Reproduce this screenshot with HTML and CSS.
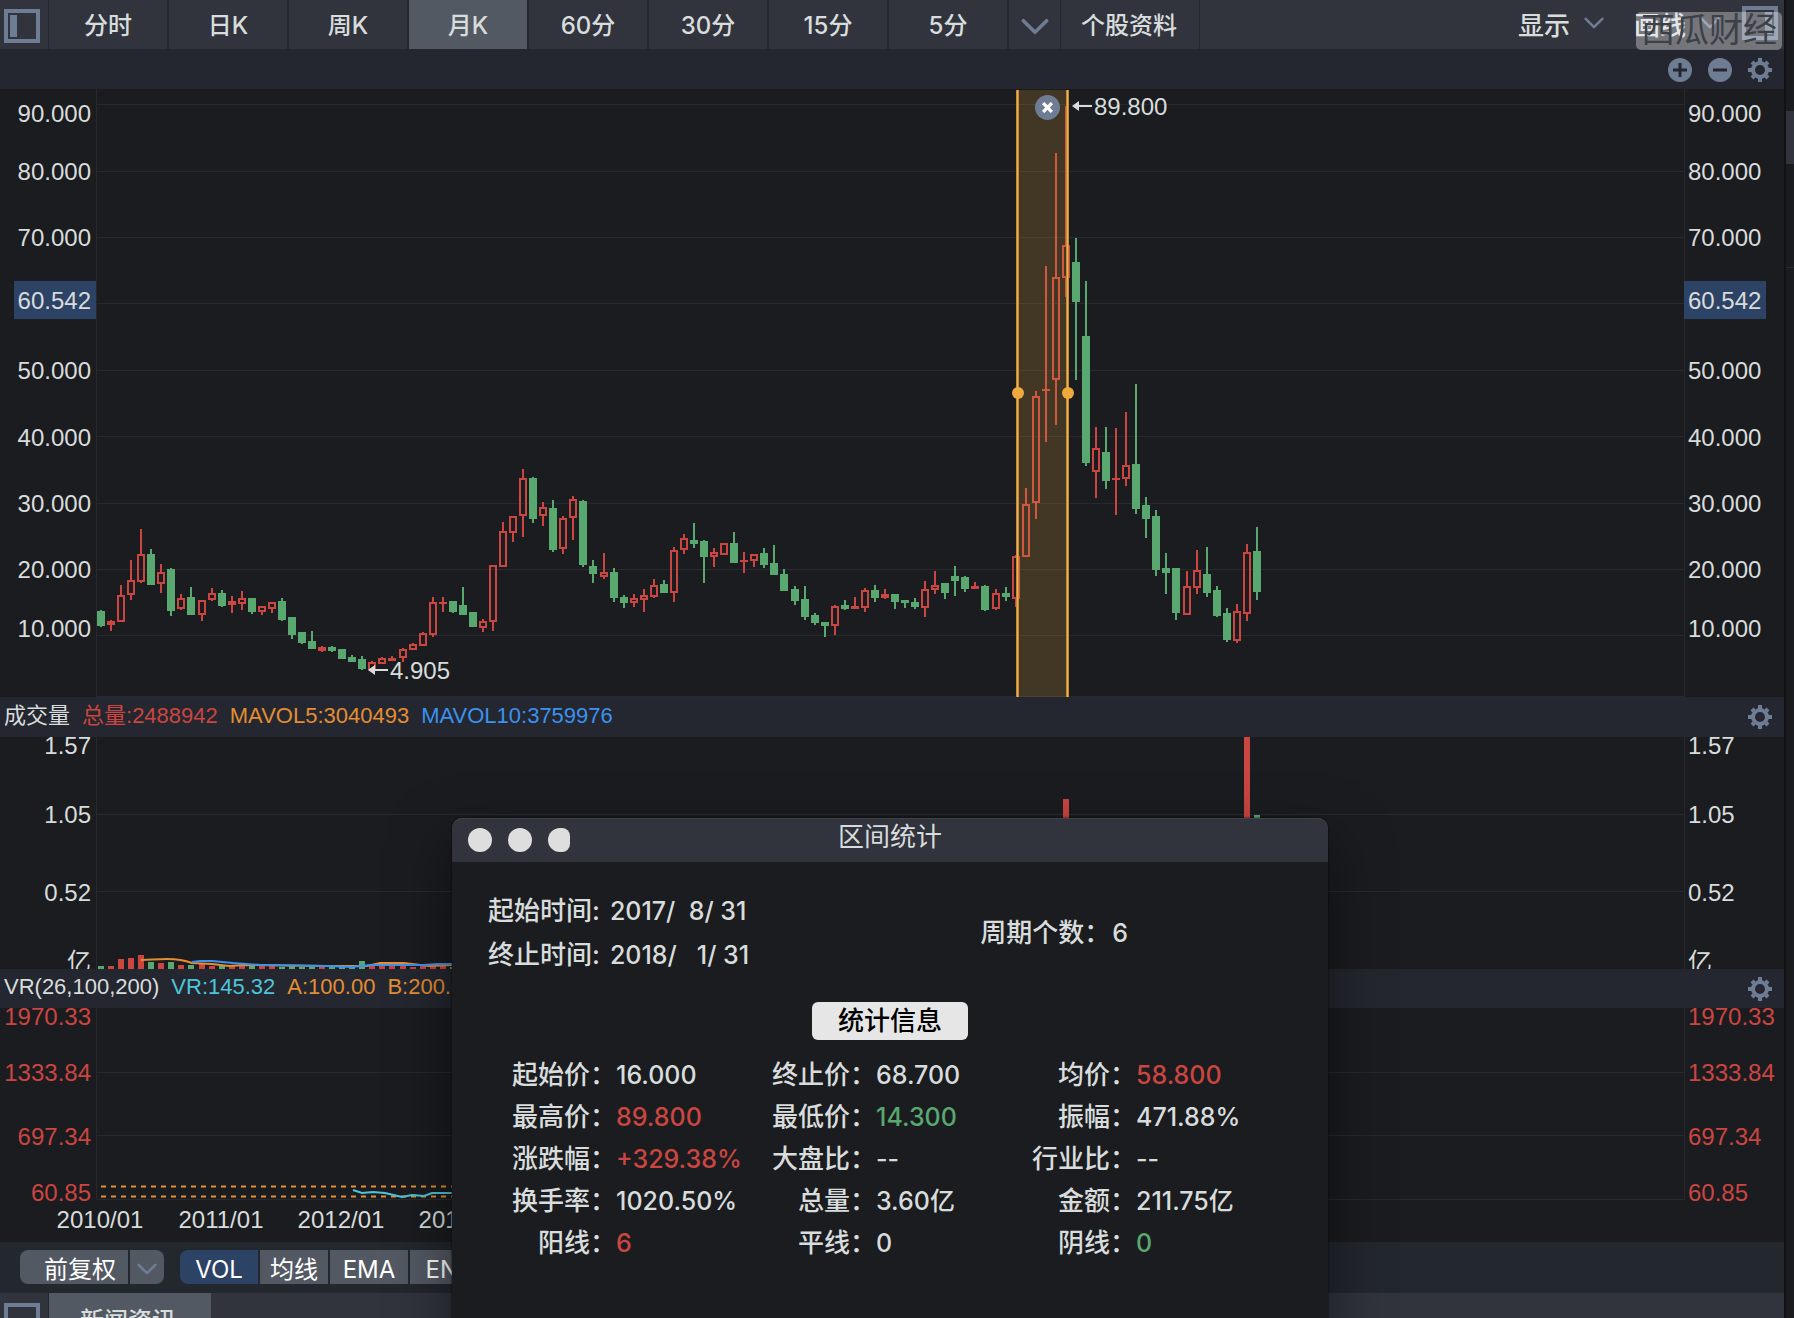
FILE: index.html
```html
<!DOCTYPE html>
<html lang="zh-CN">
<head>
<meta charset="utf-8">
<title>月K - 区间统计</title>
<link rel="stylesheet" href="styles.css">
</head>
<body>
<svg class="sprite" aria-hidden="true">
  <symbol id="chevron" viewBox="0 0 24 14"><path d="M2 2 L12 12 L22 2" fill="none" stroke="currentColor" stroke-width="3" stroke-linecap="round" stroke-linejoin="round"/></symbol>
  <symbol id="gear" viewBox="-12 -12 24 24">
    <circle r="7" fill="none" stroke="currentColor" stroke-width="4"/>
    <path d="M0 -12V-8M0 12V8M-12 0H-8M12 0H8M-8 -8L-6 -6M8 8L6 6M-8 8L-6 6M8 -8L6 -6" stroke="currentColor" stroke-width="4"/>
  </symbol>
  <symbol id="panel-left" viewBox="0 0 36 34"><rect x="2" y="2" width="32" height="30" fill="none" stroke="currentColor" stroke-width="4"/><rect x="6" y="6" width="7" height="22" fill="currentColor"/></symbol>
  <symbol id="panel-right" viewBox="0 0 36 34"><rect x="2" y="2" width="32" height="30" fill="none" stroke="currentColor" stroke-width="4"/><rect x="23" y="6" width="7" height="22" fill="currentColor"/></symbol>
  <symbol id="panel-plain" viewBox="0 0 36 34"><rect x="2" y="2" width="32" height="30" fill="none" stroke="currentColor" stroke-width="4"/></symbol>
</svg>

<div class="app">
  <main class="workspace">
    <header class="toolbar">
      <button class="cell cell-icon" aria-label="左侧栏"><svg class="icon-panel"><use href="#panel-left"/></svg></button>
      <nav class="periods">
        <button class="tab">分时</button>
        <button class="tab">日K</button>
        <button class="tab">周K</button>
        <button class="tab tab-active">月K</button>
        <button class="tab">60分</button>
        <button class="tab">30分</button>
        <button class="tab">15分</button>
        <button class="tab">5分</button>
      </nav>
      <button class="cell cell-more" aria-label="更多周期"><svg class="icon-chevron"><use href="#chevron"/></svg></button>
      <button class="cell cell-info">个股资料</button>
      <div class="tools">
        <button class="tool">显示<svg class="icon-chevron-small"><use href="#chevron"/></svg></button>
        <button class="tool">画线<svg class="icon-chevron-small"><use href="#chevron"/></svg></button>
        <button class="tool-panel" aria-label="右侧栏"><svg class="icon-panel"><use href="#panel-right"/></svg></button>
        <span class="watermark">西瓜财经</span>
      </div>
    </header>

    <div class="band band-zoom">
      <span class="band-actions">
        <button class="icon-button" aria-label="放大"><svg class="icon" viewBox="-12 -12 24 24"><circle r="12" fill="currentColor"/><path class="sign" d="M-7 0H7M0 -7V7"/></svg></button>
        <button class="icon-button" aria-label="缩小"><svg class="icon" viewBox="-12 -12 24 24"><circle r="12" fill="currentColor"/><path class="sign" d="M-7 0H7"/></svg></button>
        <button class="icon-button" aria-label="设置"><svg class="icon"><use href="#gear"/></svg></button>
      </span>
    </div>

    <section class="pane pane-price">
      <svg class="chart" aria-label="月K线">
        <g class="grid">
          <path d="M96.5 0V608"/>
          <line x1="97" x2="100%" y1="15.5" y2="15.5"/>
          <line x1="97" x2="100%" y1="82.5" y2="82.5"/>
          <line x1="97" x2="100%" y1="148.5" y2="148.5"/>
          <line x1="97" x2="100%" y1="214.5" y2="214.5"/>
          <line x1="97" x2="100%" y1="281.5" y2="281.5"/>
          <line x1="97" x2="100%" y1="347.5" y2="347.5"/>
          <line x1="97" x2="100%" y1="414.5" y2="414.5"/>
          <line x1="97" x2="100%" y1="480.5" y2="480.5"/>
          <line x1="97" x2="100%" y1="546.5" y2="546.5"/>
          <line x1="97" x2="100%" y1="607.5" y2="607.5"/>
        </g>
        <g id="candles"></g>
        <g class="marker">
          <path class="arrow" d="M1078 17H1092"/><path class="arrow-head" d="M1072 17L1079 12V22Z"/>
          <text x="1094" y="26">89.800</text>
          <path class="arrow" d="M374 581H388"/><path class="arrow-head" d="M368 581L375 576V586Z"/>
          <text x="390" y="590">4.905</text>
        </g>
        <g class="range">
          <rect class="range-fill" x="1018" y="1" width="50" height="607"/>
          <path class="range-edge" d="M1017.5 1V608M1067.5 1V608"/>
          <path class="range-line" d="M1017.5 1V608M1067.5 1V608"/>
          <circle cx="1018" cy="304" r="6"/><circle cx="1068" cy="304" r="6"/>
        </g>
        <g class="axis axis-left">
          <rect class="axis-tag" x="14" y="192" width="82" height="38"/>
          <text x="91" y="33">90.000</text><text x="91" y="91">80.000</text><text x="91" y="157">70.000</text>
          <text x="91" y="220">60.542</text><text x="91" y="290">50.000</text><text x="91" y="357">40.000</text>
          <text x="91" y="423">30.000</text><text x="91" y="489">20.000</text><text x="91" y="548">10.000</text>
        </g>
        <svg class="axis" x="100%">
          <rect class="axis-bg" x="-100" width="100" height="608"/>
          <path class="axis-line" d="M-99.5 0V608"/>
          <rect class="axis-tag" x="-100" y="192" width="82" height="38"/>
          <text x="-96" y="33">90.000</text><text x="-96" y="91">80.000</text><text x="-96" y="157">70.000</text>
          <text x="-96" y="220">60.542</text><text x="-96" y="290">50.000</text><text x="-96" y="357">40.000</text>
          <text x="-96" y="423">30.000</text><text x="-96" y="489">20.000</text><text x="-96" y="548">10.000</text>
        </svg>
      </svg>
      <button class="range-close" aria-label="关闭区间"><svg viewBox="0 0 10 10"><path d="M1 1L9 9M9 1L1 9"/></svg></button>
    </section>

    <div class="band">
      <span>成交量</span><span class="up">总量:2488942</span><span class="ma-orange">MAVOL5:3040493</span><span class="ma-blue">MAVOL10:3759976</span>
      <span class="band-actions"><button class="icon-button" aria-label="成交量设置"><svg class="icon"><use href="#gear"/></svg></button></span>
    </div>

    <section class="pane pane-volume">
      <svg class="chart" aria-label="成交量">
        <g class="grid">
          <path d="M96.5 0V232"/>
          <line x1="97" x2="100%" y1="77.5" y2="77.5"/>
          <line x1="97" x2="100%" y1="154.5" y2="154.5"/>
        </g>
        <g id="volumes"></g>
        <path class="line ma-orange" d="M141 223C150 223 156 222 167 222S184 223 192 226L212 227L229 229L245 228L326 229L367 229L380 226L404 226L429 229L452 228"/>
        <path class="line ma-blue" d="M192 225L200 224L212 224L233 226L261 228L326 229L351 230L371 228L424 228L437 227L452 227"/>
        <g class="axis axis-left">
          <text x="91" y="17">1.57</text><text x="91" y="86">1.05</text><text x="91" y="164">0.52</text><text x="91" y="233">亿</text>
        </g>
        <svg class="axis" x="100%">
          <rect class="axis-bg" x="-100" width="100" height="232"/>
          <path class="axis-line" d="M-99.5 0V232"/>
          <text x="-96" y="17">1.57</text><text x="-96" y="86">1.05</text><text x="-96" y="164">0.52</text><text x="-96" y="233">亿</text>
        </svg>
      </svg>
    </section>

    <div class="band band-vr">
      <span>VR(26,100,200)</span><span class="vr">VR:145.32</span><span class="ma-orange">A:100.00</span><span class="ma-orange">B:200.00</span>
      <span class="band-actions"><button class="icon-button" aria-label="VR设置"><svg class="icon"><use href="#gear"/></svg></button></span>
    </div>

    <section class="pane pane-vr">
      <svg class="chart" aria-label="VR指标">
        <g class="grid">
          <path d="M96.5 0V191"/>
          <line x1="97" x2="100%" y1="64.5" y2="64.5"/>
          <line x1="97" x2="100%" y1="127.5" y2="127.5"/>
          <line x1="97" x2="100%" y1="191.5" y2="191.5"/>
        </g>
        <path class="dashes" d="M101 178.5H1257M101 188.5H1257"/>
        <path class="line vr" d="M353 182L362 185L373 184L385 185L402 189L412 187L424 188L432 185L452 185"/>
        <g class="axis axis-left up">
          <text x="91" y="17">1970.33</text><text x="91" y="73">1333.84</text><text x="91" y="137">697.34</text><text x="91" y="193">60.85</text>
        </g>
        <g class="axis dates">
          <text x="100" y="220">2010/01</text><text x="221" y="220">2011/01</text><text x="341" y="220">2012/01</text><text x="462" y="220">2013/01</text>
        </g>
        <svg class="axis up" x="100%">
          <rect class="axis-bg" x="-100" width="100" height="232"/>
          <path class="axis-line" d="M-99.5 0V192"/>
          <text x="-96" y="17">1970.33</text><text x="-96" y="73">1333.84</text><text x="-96" y="137">697.34</text><text x="-96" y="193">60.85</text>
        </svg>
      </svg>
    </section>

    <div class="indicators">
      <div class="group">
        <button class="chip chip-adjust">前复权</button>
        <button class="chip chip-arrow" aria-label="复权方式"><svg class="icon-chevron-small"><use href="#chevron"/></svg></button>
      </div>
      <div class="group">
        <button class="chip chip-active">VOL</button>
        <button class="chip chip-cn">均线</button>
        <button class="chip">EMA</button>
        <button class="chip">ENE</button>
      </div>
    </div>

    <footer class="news">
      <button class="cell-icon news-icon" aria-label="展开资讯"><svg class="icon-panel"><use href="#panel-plain"/></svg></button>
      <button class="news-tab">新闻资讯</button>
    </footer>
  </main>

  <aside class="side"><div class="side-head"></div><div class="side-handle"></div><div class="side-list"></div></aside>

  <section class="dialog" role="dialog" aria-labelledby="dialog-title">
    <header class="dialog-bar">
      <div class="lights"><i></i><i></i><i class="light-cut"></i></div>
      <h1 id="dialog-title">区间统计</h1>
    </header>
    <div class="summary">
      <div class="dates-list">
        <div>起始时间:<span class="date">2017/ &nbsp;8/ 31</span></div>
        <div>终止时间:<span class="date">2018/ &nbsp; 1/ 31</span></div>
      </div>
      <div class="count">周期个数：<span class="value">6</span></div>
    </div>
    <div class="stats-box">
      <button class="stats-button">统计信息</button>
      <dl class="stats">
        <dt>起始价：</dt><dd>16.000</dd><dt>终止价：</dt><dd>68.700</dd><dt>均价：</dt><dd class="up">58.800</dd>
        <dt>最高价：</dt><dd class="up">89.800</dd><dt>最低价：</dt><dd class="down">14.300</dd><dt>振幅：</dt><dd>471.88%</dd>
        <dt>涨跌幅：</dt><dd class="up">+329.38%</dd><dt>大盘比：</dt><dd>--</dd><dt>行业比：</dt><dd>--</dd>
        <dt>换手率：</dt><dd>1020.50%</dd><dt>总量：</dt><dd>3.60亿</dd><dt>金额：</dt><dd>211.75亿</dd>
        <dt>阳线：</dt><dd class="up">6</dd><dt>平线：</dt><dd>0</dd><dt>阴线：</dt><dd class="down">0</dd>
      </dl>
    </div>
  </section>
</div>
<script src="chart.js"></script>
</body>
</html>
```
FILE: styles.css
```css
:root {
  --bg: #1b1c1f;
  --band: #24272f;
  --bar: #31343d;
  --active: #535963;
  --slate: #6f7d94;
  --text: #d8dcdc;
  --up: #cb4541;
  --down: #58a870;
  --orange: #e38e34;
  --blue: #3b92f0;
  --cyan: #4cc5dc;
  --navy: #2d4366;
  --ui: Inter, "Noto Sans CJK SC", sans-serif;
  --num: "Liberation Sans", "Noto Sans CJK SC", sans-serif;
}
* { box-sizing: border-box; }
body { margin: 0; background: var(--bg); color: var(--text); font-family: var(--ui); }
button { margin: 0; padding: 0; border: 0; background: none; color: inherit; font: inherit; }
svg { display: block; }
.sprite { position: absolute; width: 0; height: 0; }

.app { position: relative; display: flex; height: 100vh; overflow: hidden; }
.workspace { flex: 1; min-width: 0; display: flex; flex-direction: column; }
.workspace > * { flex: none; }

.toolbar { display: flex; height: 49px; background: var(--bar); font-size: 24px; font-weight: 500; }
.cell { border-right: 1px solid var(--band); }
.cell-icon { display: flex; align-items: center; width: 49px; padding: 2px 0 0 4px; color: var(--slate); }
.icon-panel { width: 36px; height: 34px; }
.periods { display: flex; }
.tab { width: 120px; height: 50px; padding-bottom: 3px; border-right: 2px solid var(--band); background: var(--bar); }
.tab-active { background: var(--active); }
.cell-more { display: flex; align-items: center; justify-content: center; width: 52px; color: var(--slate); }
.icon-chevron { width: 28px; height: 17px; margin-top: 4px; }
.icon-chevron-small { width: 20px; height: 12px; color: var(--slate); }
.cell-info { width: 139px; padding: 0 2px 2px 0; }
.tools { position: relative; display: flex; align-items: flex-start; margin-left: auto; padding-right: 6px; font-size: 26px; }
.tool { display: flex; align-items: center; gap: 14px; height: 46px; margin-right: 30px; }
.tool + .tool { margin-right: 22px; }
.tool-panel { padding-top: 6px; color: var(--slate); }
.watermark { position: absolute; right: 2px; top: 12px; width: 146px; height: 38px; border-radius: 5px; background: rgba(255, 255, 255, .33); color: #3c4047; font-size: 34px; font-weight: 400; line-height: 36px; text-align: center; }

.band { display: flex; align-items: center; gap: 12px; height: 40px; padding: 0 12px 0 4px; background: var(--band); font: 22px/36px var(--num); }
.band > span { padding-bottom: 3px; }
.band > .band-actions { display: flex; gap: 16px; margin-left: auto; padding-bottom: 0; }
.band-zoom { padding-top: 2px; }
.band-vr { height: 39px; }
.icon-button { color: var(--slate); }
.icon { width: 24px; height: 24px; }
.sign { stroke: var(--band); stroke-width: 3; }

.pane { position: relative; }
.pane-price { height: 608px; }
.pane-volume { height: 232px; }
.pane-vr { height: 234px; }
.chart { width: 100%; height: 100%; }
.chart svg { overflow: visible; }
.grid, .axis-line { stroke: #28292e; }
.axis text, .marker text { fill: currentColor; font: 24px var(--num); }
.axis-left text { text-anchor: end; }
.dates text { text-anchor: middle; }
.axis-bg { fill: var(--bg); }
.axis-tag { fill: var(--navy); }
.arrow { stroke: var(--text); stroke-width: 2; }
.arrow-head { fill: var(--text); }
.range-fill { fill: #f0a93c; fill-opacity: .19; }
.range-edge { stroke: #c08a38; stroke-width: 3; }
.range-line { stroke: #f4b04a; }
.range circle { fill: #f0a93c; }
.range-close { position: absolute; left: 1035px; top: 6px; width: 25px; height: 25px; border-radius: 50%; background: var(--slate); }
.range-close svg { width: 11px; height: 11px; margin: auto; fill: none; stroke: #fff; stroke-width: 3; }
.line { fill: none; stroke: currentColor; stroke-width: 2; }
.dashes { fill: none; stroke: var(--orange); stroke-width: 2; stroke-dasharray: 5 5; }
.candle-up { fill: none; stroke: var(--up); stroke-width: 2; }
.candle-down, .bar-down { fill: var(--down); }
.candle-solid, .bar-up { fill: var(--up); }

.up { color: var(--up); }
.down { color: var(--down); }
.ma-orange { color: var(--orange); }
.ma-blue { color: var(--blue); }
.vr { color: var(--cyan); }

.indicators { display: flex; gap: 16px; height: 51px; padding: 8px 20px; background: #23272e; color: #fff; font-size: 24px; }
.group { display: flex; gap: 2px; height: 34px; border-radius: 8px; overflow: hidden; }
.chip { width: 78px; background: var(--active); line-height: 34px; padding-top: 3px; }
.chip-adjust { width: 108px; padding-left: 12px; }
.chip-arrow { display: flex; align-items: center; justify-content: center; width: 34px; }
.chip-cn { width: 68px; }
.chip-active { background: var(--navy); }

.news { display: flex; height: 54px; background: var(--bar); font-size: 24px; font-weight: 500; }
.news-icon { padding-top: 0; border-right: 1px solid var(--band); }
.news-tab { width: 162px; background: var(--active); padding: 0 4px 4px 0; }

.side { display: flex; flex-direction: column; width: 10px; border-left: 2px solid #111214; }
.side-head { height: 111px; }
.side-handle { height: 53px; background: var(--bar); }
.side-list { height: 104px; border-bottom: 1px solid #28292e; }

.dialog { position: absolute; left: 452px; top: 818px; width: 876px; height: 520px; border-radius: 10px; background: var(--bg); box-shadow: 0 0 2px #000, 0 24px 60px rgba(0, 0, 0, .5); font-size: 26px; font-weight: 500; }
.dialog-bar { display: grid; grid-template-columns: 1fr auto 1fr; height: 44px; padding: 0 16px; border-radius: 10px 10px 0 0; background: var(--bar); box-shadow: inset 0 1px #3f424b; }
.dialog-bar h1 { margin: 0; font-size: 26px; font-weight: 400; line-height: 38px; }
.lights { display: flex; align-items: center; gap: 16px; }
.lights i { width: 24px; height: 24px; border-radius: 50%; background: #dedede; }
.lights .light-cut { width: 22px; border-radius: 12px 8px 8px 12px; }
.summary { display: flex; align-items: center; justify-content: space-between; height: 140px; padding: 2px 200px 0 36px; line-height: 44px; }
.date, .value { font-size: 25px; }
.date { margin-left: 10px; }
.value { margin-left: 2px; }
.stats-box { margin: 0 36px; text-align: center; }
.stats-button { width: 156px; height: 38px; border-radius: 6px; background: #e6e6e6; color: #000; line-height: 38px; }
.stats { display: grid; grid-template-columns: repeat(3, 128px 132px); margin: 14px 0 0; line-height: 42px; text-align: left; white-space: nowrap; }
.stats dt { text-align: right; }
.stats dd { margin: 0; font-size: 25px; }
```
FILE: chart.js
```js
// Monthly candles since 2010/01: [direction, high, body top, body bottom, low], in plot rows.
const candles = [
  ['d',521,522,537,538],['u',531,532,536,542],['u',496,506,533,533],['u',471,491,506,511],['u',440,465,493,494],
  ['d',460,465,496,496],['u',475,483,495,504],['d',479,480,522,527],['u',505,509,520,521],['d',498,508,526,526],
  ['u',511,511,526,532],['u',499,504,511,512],['d',501,504,517,518],['u',507,512,516,524],['u',502,509,515,521],
  ['d',509,509,523,525],['u',517,517,523,526],['u',513,513,520,524],['d',509,512,531,532],['d',528,528,546,550],
  ['d',543,543,554,555],['d',542,552,560,560],['u',557,558,562,563],['d',557,558,562,563],['d',560,560,570,570],
  ['d',566,568,573,573],['d',567,570,580,581],['u',572,573,581,581],['u',568,569,575,575],['u',567,569,572,572],
  ['u',559,560,569,573],['u',554,555,561,561],['u',543,544,557,557],['u',508,513,546,548],['u',508,513,515,523],
  ['d',512,512,523,524],['d',498,516,526,526],['d',523,523,538,538],['u',530,532,539,543],['u',476,476,533,542],
  ['u',433,442,478,478],['u',427,427,444,453],['u',380,389,427,448],['d',388,389,430,434],['u',413,418,427,437],
  ['d',411,419,461,463],['u',427,429,460,465],['u',407,410,429,451],['d',411,412,476,478],['d',471,477,485,494],
  ['u',464,483,488,490],['d',479,483,509,513],['d',506,508,514,519],['u',505,509,514,518],['u',500,506,511,523],
  ['u',490,496,508,509],['d',491,495,504,504],['u',458,461,504,513],['u',445,449,461,465],['d',434,451,455,459],
  ['d',451,452,468,494],['u',459,463,468,478],['u',454,454,466,466],['d',443,454,474,474],['u',463,471,473,484],
  ['u',465,465,472,478],['d',459,464,476,479],['d',456,474,486,486],['d',480,485,502,502],['d',497,500,512,516],
  ['d',497,510,528,531],['d',524,526,534,536],['d',533,533,537,548],['u',516,517,537,546],['d',511,516,520,521],
  ['u',508,517,520,520],['u',499,501,519,523],['d',496,501,509,513],['u',500,505,509,510],['d',505,505,513,520],
  ['d',511,511,514,519],['d',509,513,518,520],['u',492,500,519,528],['u',482,496,501,505],['d',494,494,504,510],
  ['d',477,487,492,507],['d',487,488,500,503],['u',493,497,500,500],['d',496,497,521,522],['u',500,504,520,521],
  ['d',498,504,508,512],['u',466,467,510,518],['u',399,415,468,468],['u',302,307,414,430],['u',177,300,302,353],
  ['u',64,188,291,336],['u',17,156,189,208],['d',149,173,213,291],['d',192,247,374,377],['u',338,359,383,409],
  ['d',338,363,392,400],['u',339,389,391,426],['u',323,376,390,397],['d',295,375,420,425],['d',408,416,430,449],
  ['d',421,427,481,487],['d',464,479,484,505],['d',479,479,524,531],['u',482,497,526,526],['u',461,481,499,505],
  ['d',458,485,504,508],['d',497,501,527,528],['d',519,524,551,553],['u',515,522,552,554],['u',455,463,525,532],
  ['d',438,462,503,511]
];

// Volume bar heights by month index; months not listed are close to zero.
const volumes = [3,3,10,11,14,7,6,7,4,4,5,3,3,3,5,3,3,3,2,3,2,2,2,3,3,3,8,4,7,3,3,2,3,5,4,2];
volumes[96] = 170;
volumes[114] = 232;
volumes[115] = 154;

const FIRST_X = 101;
const STEP = 10.051;
const VOLUME_BASE = 232;
const xAt = i => FIRST_X + Math.round(i * STEP);

function rect(cls, x, y, w, h) {
  return `<rect class="${cls}" x="${x}" y="${y}" width="${w}" height="${h}"/>`;
}

function candle([dir, high, top, bottom, low], i) {
  const x = xAt(i);
  if (dir === 'd') {
    return rect('candle-down', x - 1, high, 2, low - high) + rect('candle-down', x - 4, top, 8, bottom - top);
  }
  const wicks = rect('candle-solid', x - 1, high, 2, top - high) + rect('candle-solid', x - 1, bottom, 2, low - bottom);
  const body = bottom - top <= 4
    ? rect('candle-solid', x - 4, top, 8, bottom - top)
    : rect('candle-up', x - 3, top + 1, 6, bottom - top - 2);
  return wicks + body;
}

document.getElementById('candles').innerHTML = candles.map(candle).join('');
document.getElementById('volumes').innerHTML = candles.map(([dir], i) => {
  const h = volumes[i] || 2;
  return rect(dir === 'd' ? 'bar-down' : 'bar-up', xAt(i) - 3, VOLUME_BASE - h, 6, h);
}).join('');
```
